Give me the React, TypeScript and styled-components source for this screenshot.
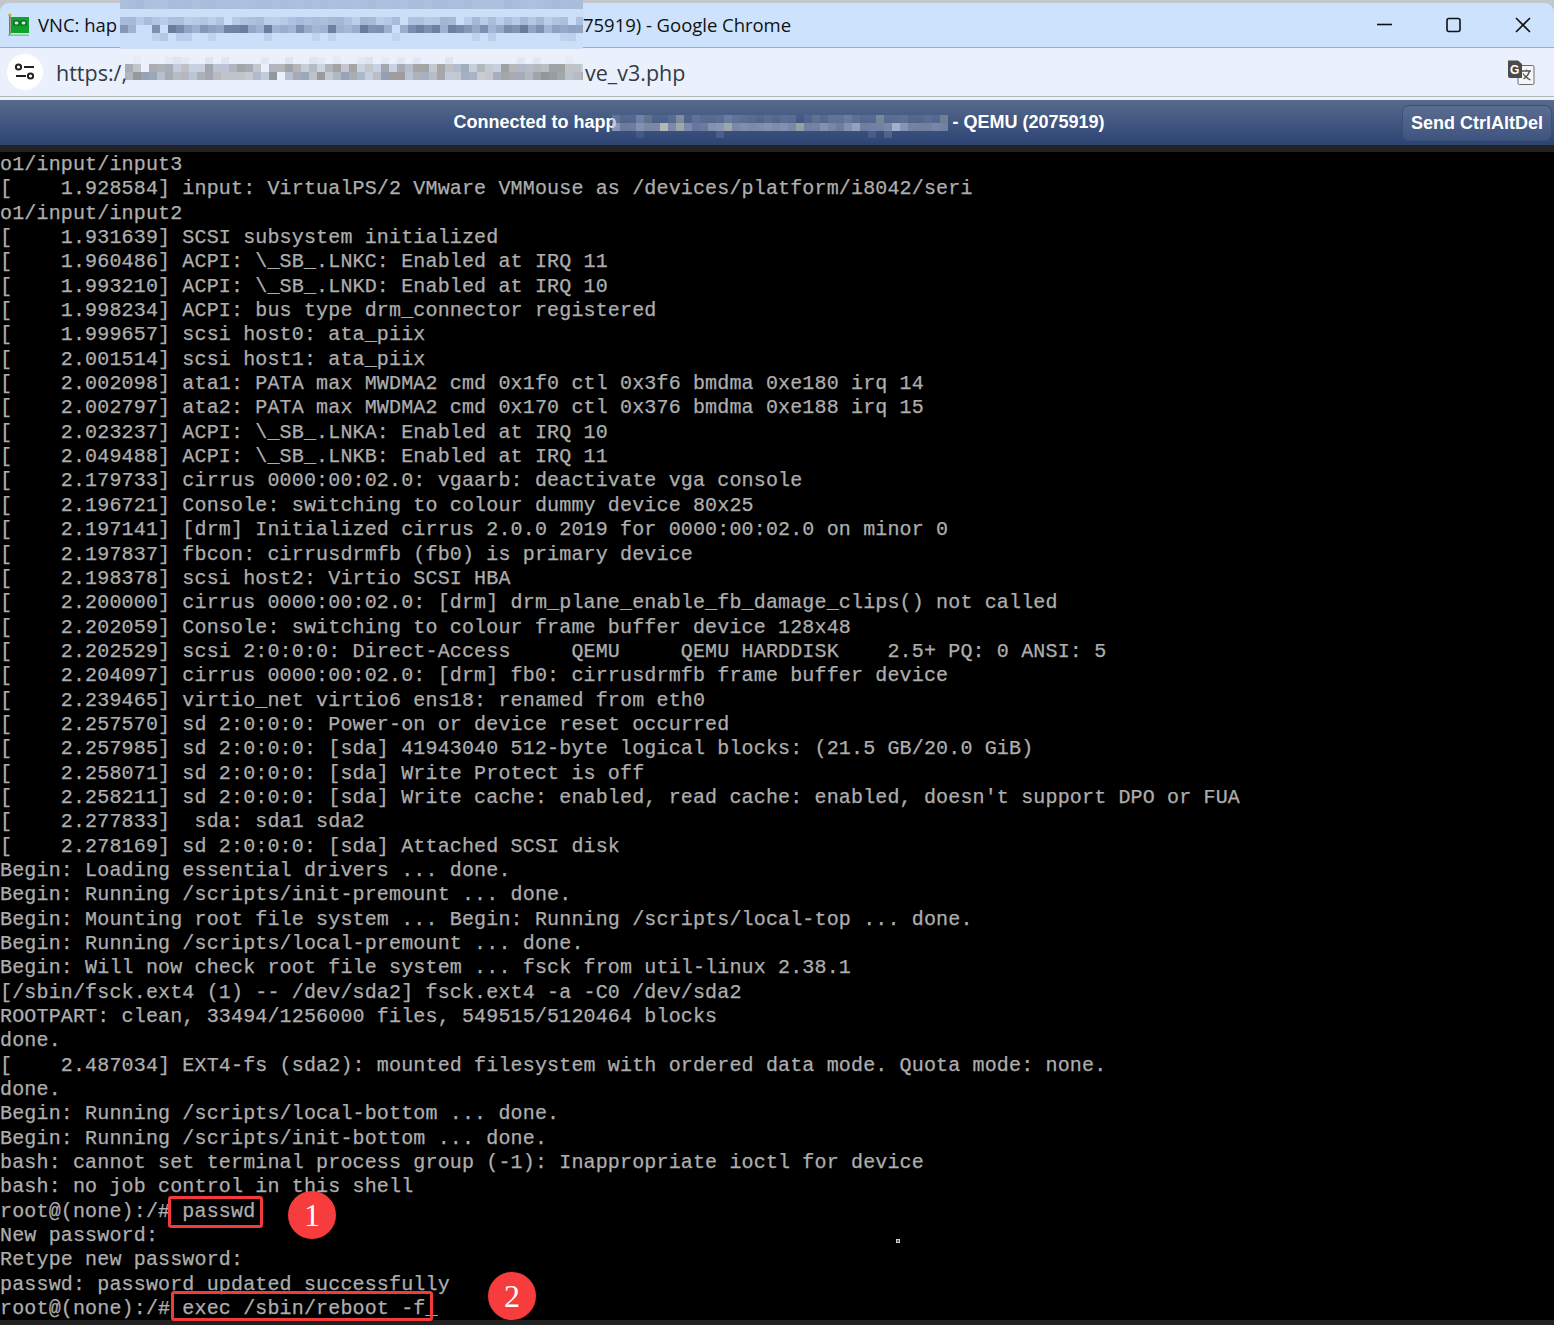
import styled, { createGlobalStyle } from "styled-components";

const GlobalStyle = createGlobalStyle`
  html, body {
    margin: 0;
    padding: 0;
    background: #000;
    overflow: hidden;
  }
`;

const Page = styled.div`
  position: relative;
  width: 1554px;
  height: 1325px;
  overflow: hidden;
  display: flex;
  flex-direction: column;
  background: #c3c6ca;
  padding-top: 3px;
  box-sizing: border-box;
`;

const TitleBar = styled.div`
  height: 44px;
  flex-shrink: 0;
  display: flex;
  align-items: center;
  background: #cde2fc;
  border-radius: 9px 9px 0 0;
  border-bottom: 1px solid #a9acb0;
  padding-left: 7px;
  color: #111;
  font-family: "Open Sans", "Noto Sans", sans-serif;
  font-size: 18.5px;
  letter-spacing: -0.03px;
`;

const TitleText = styled.span`
  position: relative;
  top: -1px;
  white-space: nowrap;
`;

const Favicon = styled.svg`
  width: 24px;
  height: 26px;
  margin-right: 7px;
  flex-shrink: 0;
`;

const TitleMosaic = styled.svg`
  align-self: flex-start;
  margin: -3px 0 0 3px;
  flex-shrink: 0;
  position: relative;
  z-index: 2;
`;

const WindowButtons = styled.div`
  margin-left: auto;
  display: flex;
  align-items: center;
  gap: 51px;
  padding-right: 22px;
`;

const WindowIcon = styled.svg`
  width: 18px;
  height: 18px;
  display: block;
`;

const AddressBar = styled.div`
  height: 49px;
  flex-shrink: 0;
  display: flex;
  align-items: center;
  background: #eaf1fc;
  border-bottom: 1px solid #b2b4b8;
  padding: 0 19px 0 7px;
  color: #333a44;
  font-family: "Open Sans", "Noto Sans", sans-serif;
  font-size: 21.5px;
  box-sizing: border-box;
`;

const SiteBadge = styled.div`
  width: 36px;
  height: 36px;
  border-radius: 50%;
  background: #fff;
  display: flex;
  align-items: center;
  justify-content: center;
  margin-right: 13px;
  flex-shrink: 0;
`;

const UrlMosaic = styled.svg`
  flex-shrink: 0;
  margin: 0 2px 0 -2px;
  position: relative;
`;

const StatusMosaic = styled.svg`
  flex-shrink: 0;
  margin: 0 4px 0 -4px;
  position: relative;
`;

const TranslateIcon = styled.svg`
  width: 28px;
  height: 28px;
  margin-left: auto;
`;

const Gap = styled.div`
  height: 3px;
  background: #eaf1fc;
  flex-shrink: 0;
`;

const VncBar = styled.div`
  height: 45px;
  flex-shrink: 0;
  display: grid;
  grid-template-columns: 1fr auto 1fr;
  align-items: center;
  background: linear-gradient(#566a8c, #2d4373);
  color: #fff;
  font-family: "Liberation Sans", Arial, sans-serif;
  font-size: 18px;
  font-weight: 700;
  padding-left: 4px;
`;

const VncStatus = styled.div`
  grid-column: 2;
  display: flex;
  align-items: center;
  white-space: nowrap;
`;

const SendButton = styled.div`
  grid-column: 3;
  justify-self: end;
  width: 150px;
  height: 36px;
  margin-right: 2px;
  margin-top: 1px;
  padding-top: 1px;
  box-sizing: border-box;
  display: flex;
  align-items: center;
  justify-content: center;
  border-radius: 7px;
  border: 1px solid #3a5079;
  background: linear-gradient(#5a6c90, #3f5480);
`;

const TerminalGap = styled.div`
  height: 7px;
  flex-shrink: 0;
  background: #222;
`;

const Terminal = styled.pre`
  flex: 1;
  margin: 0;
  padding-top: 1px;
  background: #000;
  color: #aeaeae;
  font-family: "Liberation Mono", "DejaVu Sans Mono", monospace;
  font-size: 20px;
  letter-spacing: 0.155px;
  line-height: 24.34px;
  -webkit-text-stroke: 0.25px #aeaeae;
  overflow: hidden;
`;

const BottomStrip = styled.div`
  height: 5px;
  flex-shrink: 0;
  background: #222;
`;

const Outline = styled.div<{ $x: number; $y: number; $w: number; $h: number }>`
  position: absolute;
  left: ${(p) => p.$x}px;
  top: ${(p) => p.$y}px;
  width: ${(p) => p.$w}px;
  height: ${(p) => p.$h}px;
  box-sizing: border-box;
  border: 3px solid #f23a3a;
  border-radius: 3px;
`;

const StepBadge = styled.div<{ $x: number; $y: number }>`
  position: absolute;
  left: ${(p) => p.$x}px;
  top: ${(p) => p.$y}px;
  width: 48px;
  height: 48px;
  border-radius: 50%;
  background: #f63c3c;
  color: #fff;
  display: flex;
  align-items: center;
  justify-content: center;
  font-family: "Liberation Serif", "Times New Roman", serif;
  font-size: 32px;
`;

const Speck = styled.div`
  position: absolute;
  left: 896px;
  top: 1239px;
  width: 4px;
  height: 4px;
  background: radial-gradient(#666 40%, #ddd 60%);
`;

const LOG = `o1/input/input3
[    1.928584] input: VirtualPS/2 VMware VMMouse as /devices/platform/i8042/seri
o1/input/input2
[    1.931639] SCSI subsystem initialized
[    1.960486] ACPI: \\_SB_.LNKC: Enabled at IRQ 11
[    1.993210] ACPI: \\_SB_.LNKD: Enabled at IRQ 10
[    1.998234] ACPI: bus type drm_connector registered
[    1.999657] scsi host0: ata_piix
[    2.001514] scsi host1: ata_piix
[    2.002098] ata1: PATA max MWDMA2 cmd 0x1f0 ctl 0x3f6 bmdma 0xe180 irq 14
[    2.002797] ata2: PATA max MWDMA2 cmd 0x170 ctl 0x376 bmdma 0xe188 irq 15
[    2.023237] ACPI: \\_SB_.LNKA: Enabled at IRQ 10
[    2.049488] ACPI: \\_SB_.LNKB: Enabled at IRQ 11
[    2.179733] cirrus 0000:00:02.0: vgaarb: deactivate vga console
[    2.196721] Console: switching to colour dummy device 80x25
[    2.197141] [drm] Initialized cirrus 2.0.0 2019 for 0000:00:02.0 on minor 0
[    2.197837] fbcon: cirrusdrmfb (fb0) is primary device
[    2.198378] scsi host2: Virtio SCSI HBA
[    2.200000] cirrus 0000:00:02.0: [drm] drm_plane_enable_fb_damage_clips() not called
[    2.202059] Console: switching to colour frame buffer device 128x48
[    2.202529] scsi 2:0:0:0: Direct-Access     QEMU     QEMU HARDDISK    2.5+ PQ: 0 ANSI: 5
[    2.204097] cirrus 0000:00:02.0: [drm] fb0: cirrusdrmfb frame buffer device
[    2.239465] virtio_net virtio6 ens18: renamed from eth0
[    2.257570] sd 2:0:0:0: Power-on or device reset occurred
[    2.257985] sd 2:0:0:0: [sda] 41943040 512-byte logical blocks: (21.5 GB/20.0 GiB)
[    2.258071] sd 2:0:0:0: [sda] Write Protect is off
[    2.258211] sd 2:0:0:0: [sda] Write cache: enabled, read cache: enabled, doesn't support DPO or FUA
[    2.277833]  sda: sda1 sda2
[    2.278169] sd 2:0:0:0: [sda] Attached SCSI disk
Begin: Loading essential drivers ... done.
Begin: Running /scripts/init-premount ... done.
Begin: Mounting root file system ... Begin: Running /scripts/local-top ... done.
Begin: Running /scripts/local-premount ... done.
Begin: Will now check root file system ... fsck from util-linux 2.38.1
[/sbin/fsck.ext4 (1) -- /dev/sda2] fsck.ext4 -a -C0 /dev/sda2
ROOTPART: clean, 33494/1256000 files, 549515/5120464 blocks
done.
[    2.487034] EXT4-fs (sda2): mounted filesystem with ordered data mode. Quota mode: none.
done.
Begin: Running /scripts/local-bottom ... done.
Begin: Running /scripts/init-bottom ... done.
bash: cannot set terminal process group (-1): Inappropriate ioctl for device
bash: no job control in this shell
root@(none):/# passwd
New password:
Retype new password:
passwd: password updated successfully
root@(none):/# exec /sbin/reboot -f_`;

// pixelated blur that hides the hostname, one row of cells per band
type Band = { y: number; h: number; dark: number; light: number; fill: number };

const Mosaic = ({
  as: Svg,
  width,
  height,
  background,
  bands,
  tint,
  seed,
}: {
  as: typeof TitleMosaic;
  width: number;
  height: number;
  background?: string;
  bands: Band[];
  tint: (t: number, rnd: number) => string;
  seed: number;
}) => {
  let state = seed;
  const next = () => {
    state = (state * 1103515245 + 12345) & 0x7fffffff;
    return (state >> 8) / 0x7fffff;
  };
  const cell = 8;
  const cells = [];
  for (const band of bands) {
    for (let x = 0; x < width; x += cell) {
      const a = next();
      const b = next();
      if (a > band.fill) continue;
      const t = band.light + (band.dark - band.light) * b;
      cells.push(
        <rect
          key={`${band.y}-${x}`}
          x={x}
          y={band.y}
          width={cell}
          height={band.h}
          fill={tint(t, next())}
        />
      );
    }
  }
  return (
    <Svg width={width} height={height} viewBox={`0 0 ${width} ${height}`}>
      {background && <rect width={width} height={height} fill={background} />}
      {cells}
    </Svg>
  );
};

const blueTint = (t: number) =>
  `rgba(${70 + 40 * (1 - t)}, ${90 + 30 * (1 - t)}, ${120 + 50 * (1 - t)}, ${t})`;
const greyTint = (t: number, r: number) =>
  r > 0.7
    ? `rgba(110, 125, 150, ${t})`
    : `rgba(${r > 0.35 ? 120 : 105}, ${r > 0.35 ? 115 : 108}, ${r > 0.35 ? 108 : 112}, ${t})`;
const slateTint = (t: number, r: number) =>
  r > 0.92
    ? `rgba(205, 210, 190, ${t})`
    : r > 0.72
      ? `rgba(170, 185, 215, ${t})`
      : `rgba(${125 + 30 * r}, ${140 + 20 * r}, ${175 + 10 * r}, ${t})`;

const App = () => {
  return (
    <>
      <GlobalStyle />
      <Page>
        <TitleBar>
          <Favicon viewBox="0 0 24 26">
            <rect x="2" y="3" width="1.6" height="20" fill="#8a7a3a" />
            <circle cx="2.800" cy="3" r="1.600" fill="#c9a92e" />
            <rect x="4" y="5" width="18" height="16" fill="#0fa32e" />
            <rect x="7" y="9" width="5" height="4" rx="1" fill="#cfeccf" stroke="#054d1a" strokeWidth="1.200" />
            <rect x="14" y="9" width="5" height="4" rx="1" fill="#cfeccf" stroke="#054d1a" strokeWidth="1.200" />
            <rect x="1" y="22.500" width="21" height="1.500" fill="#6fd08a" />
          </Favicon>
          <TitleText>VNC: hap</TitleText>
          <Mosaic
            as={TitleMosaic}
            width={463}
            height={49}
            background="#cbdff8"
            seed={7}
            bands={[
              { y: 0, h: 9, dark: 0.32, light: 0.27, fill: 1 },
              { y: 17, h: 8, dark: 0.36, light: 0.14, fill: 0.92 },
              { y: 25, h: 8, dark: 0.8, light: 0.35, fill: 0.95 },
              { y: 33, h: 8, dark: 0.22, light: 0.08, fill: 0.2 },
            ]}
            tint={blueTint}
          />
          <TitleText>75919) - Google Chrome</TitleText>
          <WindowButtons>
            <WindowIcon viewBox="0 0 18 18">
              <path d="M1 8.500h15" stroke="#111" strokeWidth="1.600" />
            </WindowIcon>
            <WindowIcon viewBox="0 0 18 18">
              <rect x="2" y="2.500" width="13" height="13" rx="2" fill="none" stroke="#111" strokeWidth="1.600" />
            </WindowIcon>
            <WindowIcon viewBox="0 0 18 18">
              <path d="M2 2l14 14M16 2L2 16" stroke="#111" strokeWidth="1.600" />
            </WindowIcon>
          </WindowButtons>
        </TitleBar>
        <AddressBar>
          <SiteBadge>
            <svg width="22" height="20" viewBox="0 0 22 20" fill="none" stroke="#222" strokeWidth="2">
              <circle cx="4.500" cy="5" r="2.600" />
              <path d="M10 5h10M2 14h10" />
              <circle cx="16.500" cy="14" r="2.600" />
            </svg>
          </SiteBadge>
          <span>https:/,</span>
          <Mosaic
            as={UrlMosaic}
            width={458}
            height={30}
            seed={23}
            bands={[
              { y: 0, h: 7, dark: 0.1, light: 0.03, fill: 0.3 },
              { y: 7, h: 8, dark: 0.65, light: 0.18, fill: 0.92 },
              { y: 15, h: 8, dark: 0.7, light: 0.28, fill: 0.97 },
            ]}
            tint={greyTint}
          />
          <span>ve_v3.php</span>
          <TranslateIcon viewBox="0 0 28 28">
            <rect x="11" y="7.500" width="16" height="19" rx="1.500" fill="#f4f6f9" stroke="#6a6a6a" />
            <path d="M1 2.500h10l4 3.500v14H3a2 2 0 0 1-2-2z" fill="#4b4b4b" />
            <text x="3" y="15.500" fontFamily="Liberation Sans, sans-serif" fontSize="12" fontWeight="700" fill="#fff">G</text>
            <path d="M15 13h9M19.500 11.500v2M22.500 13c-1 4-3 6-6 8M16 15.500c1.500 2.500 4 5 7.500 6.500" fill="none" stroke="#555" strokeWidth="1.300" />
          </TranslateIcon>
        </AddressBar>
        <Gap />
        <VncBar>
          <VncStatus>
            <span>Connected to happ</span>
            <Mosaic
              as={StatusMosaic}
              width={336}
              height={30}
              seed={41}
              bands={[
                { y: 7, h: 8, dark: 0.45, light: 0.15, fill: 0.95 },
                { y: 15, h: 8, dark: 0.95, light: 0.6, fill: 1 },
                { y: 23, h: 7, dark: 0.35, light: 0.15, fill: 0.12 },
              ]}
              tint={slateTint}
            />
            <span>- QEMU (2075919)</span>
          </VncStatus>
          <SendButton>Send CtrlAltDel</SendButton>
        </VncBar>
        <TerminalGap />
        <Terminal>{LOG}</Terminal>
        <BottomStrip />
        <Outline $x={168} $y={1196} $w={95} $h={32} />
        <Outline $x={171} $y={1291} $w={262} $h={30} />
        <StepBadge $x={288} $y={1191}>1</StepBadge>
        <StepBadge $x={488} $y={1272}>2</StepBadge>
        <Speck />
      </Page>
    </>
  );
};

export default App;
